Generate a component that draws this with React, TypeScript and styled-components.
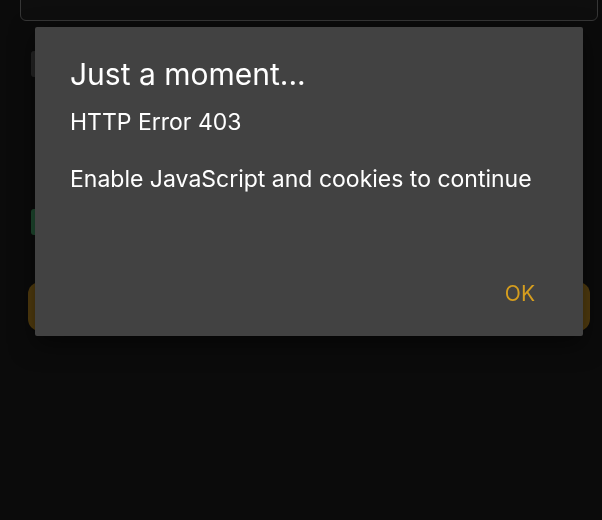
import React from "react";
import styled, { createGlobalStyle } from "styled-components";

const GlobalStyle = createGlobalStyle`
  html, body {
    margin: 0;
    padding: 0;
    background: #0b0b0b;
    font-family: Inter, Roboto, sans-serif;
  }
`;

const Page = styled.div`
  width: 602px;
  height: 520px;
  padding: 0 4px 0 20px;
  box-sizing: border-box;
  display: flex;
  flex-direction: column;
  overflow: hidden;
`;

const TopCard = styled.div`
  height: 60px;
  margin-top: -41px;
  border: 1px solid #363636;
  border-radius: 6px;
  background: #0e0e0e;
`;

const Content = styled.div`
  padding: 30px 8px 0 8px;
  display: flex;
  flex-direction: column;
`;

const Field = styled.div<{ $color: string; $top: number; $h: number }>`
  margin-top: ${(p) => p.$top}px;
  margin-left: 3px;
  width: 40px;
  height: ${(p) => p.$h}px;
  border-radius: 3px;
  background: ${(p) => p.$color};
`;

const BigButton = styled.div`
  margin: 47px 8px 0 8px;
  height: 49px;
  border-radius: 12px;
  background: #533d0f;
`;

const Dialog = styled.div`
  position: fixed;
  left: 35px;
  top: 27px;
  width: 548px;
  height: 309px;
  box-sizing: border-box;
  background: #424242;
  border-radius: 2px;
  box-shadow: 0 8px 24px rgba(0, 0, 0, 0.5);
  padding: 29px 35px 0 35px;
  display: flex;
  flex-direction: column;
  color: #ffffff;
`;

const Title = styled.h2`
  margin: 0 0 14px 0;
  font-size: 30px;
  font-weight: 400;
  line-height: 36px;
`;

const Message = styled.p<{ $gap?: number }>`
  margin: ${(p) => p.$gap ?? 0}px 0 0 0;
  font-size: 23px;
  line-height: 32px;
  white-space: nowrap;
`;

const Actions = styled.div`
  margin-top: auto;
  margin-bottom: 30px;
  margin-right: 13px;
  display: flex;
  justify-content: flex-end;
`;

const OkButton = styled.button`
  border: none;
  background: transparent;
  color: #d69e1e;
  font-family: inherit;
  font-size: 21px;
  line-height: 24px;
  padding: 0;
`;

export default function App() {
  return (
    <>
      <GlobalStyle />
      <Page>
        <TopCard />
        <Content>
          <Field $color="#262626" $top={0} $h={26} />
          <Field $color="#1f4a30" $top={132} $h={26} />
        </Content>
        <BigButton />
      </Page>
      <Dialog>
        <Title>Just a moment...</Title>
        <Message>HTTP Error 403</Message>
        <Message $gap={25}>Enable JavaScript and cookies to continue</Message>
        <Actions>
          <OkButton>OK</OkButton>
        </Actions>
      </Dialog>
    </>
  );
}
